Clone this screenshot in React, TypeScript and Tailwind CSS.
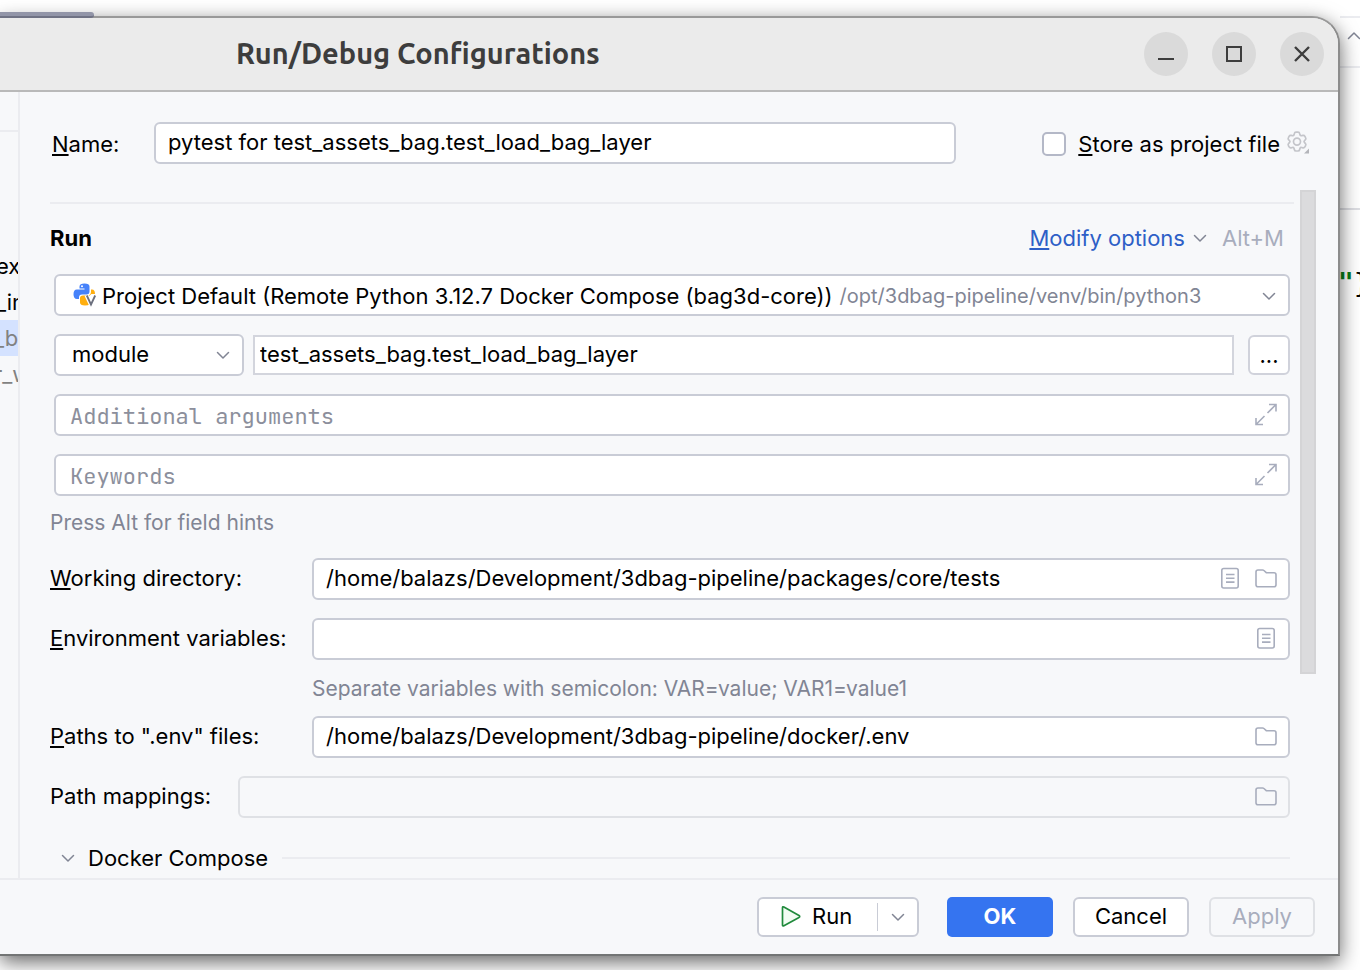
import React from "react";

const FIELD = "flex h-[42px] items-center rounded-md border-2 border-[#c9ccd6] bg-white";
const INPUT = "h-full min-w-0 flex-1 bg-transparent outline-none";
const MONO =
  "pt-0.5 font-['JetBrains_Mono','DejaVu_Sans_Mono',monospace] placeholder:text-[#8c8f9c]";

function Chevron({ className = "" }: { className?: string }) {
  return (
    <svg className={`shrink-0 ${className}`} width="14" height="10" viewBox="0 0 14 10" fill="none" stroke="#818594" strokeWidth="1.5" strokeLinecap="round" strokeLinejoin="round">
      <path d="M1.5 2.500 7 8 12.5 2.500" />
    </svg>
  );
}

function FolderIcon() {
  return (
    <svg width="24" height="24" viewBox="0 0 24 24" fill="none" stroke="#a8adbd" strokeWidth="1.6">
      <path d="M2 18.500V6a2 2 0 0 1 2-2h4.6a2 2 0 0 1 1.3.5L12.300 6.700H20a2 2 0 0 1 2 2V18.700a2 2 0 0 1-2 2H4a2 2 0 0 1-2-2Z" />
    </svg>
  );
}

function ListIcon() {
  return (
    <svg width="24" height="24" viewBox="0 0 24 24" fill="none" stroke="#a8adbd" strokeWidth="1.6">
      <rect x="3.800" y="2.500" width="16.400" height="19.500" rx="2" />
      <path d="M8 8.500h8.500M8 12.300h8.500M8 16.100h8.500" />
    </svg>
  );
}

function ExpandIcon() {
  return (
    <svg width="24" height="24" viewBox="0 0 24 24" fill="none" stroke="#a8adbd" strokeWidth="1.6">
      <path d="M15 1.500h7V8.500M22 1.500 13.500 10M2 15V21.500h7M2 21.500l8.500-8.500" />
    </svg>
  );
}

function PythonIcon() {
  return (
    <svg className="shrink-0" width="24" height="24" viewBox="0 0 24 24">
      <path fill="#4682fa" d="M6.500 3.500Q6.500.500 11.500.500t5 3V8.500q0 3-3 3H9q-3 0-3 3v1.500H4q-3.500 0-3.500-4.800T4 6.500h7.500V5.500h-5Z" />
      <circle cx="9" cy="3.200" r="1" fill="#fff" />
      <path fill="#ffaf0f" d="M18 6.500h1q3 0 3 4.500h-3.600l-2 1.800h-3.900l3.900 8.700q-1 1-4.400 1-5 0-5-3V15q0-2.500 3-2.500h4q4 0 4-4Z" />
      <path d="m13.500 12.500 4.500 9.500 4.500-9.500" fill="none" stroke="#fff" strokeWidth="4" />
      <path d="m13.800 12.500 4.200 9 4.200-9" fill="none" stroke="#6c707e" strokeWidth="1.800" />
    </svg>
  );
}

function GearIcon() {
  return (
    <svg width="24" height="24" viewBox="0 0 24 24" fill="none" stroke="#c4c5ca" strokeWidth="1.700" strokeLinejoin="round">
      <path d="M8.300 2.700Q8.600 1.200 10 1.200h2q1.400 0 1.700 1.500l.3 1.200q.4 1 1.600.8l1.400-.3q1.300-.2 1.900.9l.7 1.300q.7 1.200-.3 2.200l-.9 1q-.7.800 0 1.600l.9 1q1 1 .3 2.200l-.7 1.300q-.6 1.100-1.900.9l-1.400-.3q-1.200-.2-1.600.8l-.3 1.200Q13.400 20 12 20h-2q-1.400 0-1.700-1.500L8 17.300q-.4-1-1.600-.8l-1.400.3q-1.300.2-1.900-.9l-.7-1.300q-.7-1.200.3-2.200l.9-1q.7-.8 0-1.600l-.9-1q-1-1-.3-2.200l.7-1.300q.6-1.100 1.900-.9l1.400.3q1.200.2 1.600-.8Z" />
      <circle cx="11" cy="10.600" r="3.500" />
      <path d="M23 17.500v5h-5Z" fill="#b4b5ba" stroke="none" />
    </svg>
  );
}

function IconButton({ label, children }: { label: string; children: React.ReactNode }) {
  return (
    <button type="button" aria-label={label} className="size-6 shrink-0">
      {children}
    </button>
  );
}

function WindowButton({ label, d, width }: { label: string; d: string; width: number }) {
  return (
    <button type="button" aria-label={label} className="flex size-11 items-center justify-center rounded-full bg-[#dadada]">
      <svg width="20" height="20" viewBox="0 0 20 20" fill="none" stroke="#3d3d3d" strokeWidth={width}>
        <path d={d} />
      </svg>
    </button>
  );
}

function Mnemonic({ text }: { text: string }) {
  return (
    <>
      <span className="underline decoration-2 underline-offset-2 [text-decoration-skip-ink:none]">{text[0]}</span>
      {text.slice(1)}
    </>
  );
}

function Sidebar() {
  return (
    <aside className="flex w-5 shrink-0 flex-col overflow-hidden border-r-2 border-[#ebecf0] leading-9 whitespace-nowrap">
      <div className="h-[156px]">
        <div className="h-10 border-b-2 border-[#ebecf0]" />
      </div>
      <div className="h-9"><span className="-ml-1">ex</span></div>
      <div className="h-9"><span className="-ml-1">_in</span></div>
      <div className="h-9 bg-[#d4e2ff] text-[#818181]"><span className="-ml-1.5">_b</span></div>
      <div className="h-9 text-[#818181]"><span className="-ml-1.5">r_w</span></div>
    </aside>
  );
}

export default function App() {
  return (
    <div className="flex min-h-screen overflow-hidden bg-white font-['Inter',sans-serif] text-[22px] leading-7 text-black">
      <div className="relative flex min-w-0 flex-1 flex-col pt-4 pb-3.5">
        <div className="absolute top-3 left-0 z-20 h-1.5 w-[94px] rounded-r-sm border-b-2 border-[#6f7284] bg-[#9295a8]" />
        <main className="relative z-10 flex flex-1 flex-col overflow-hidden rounded-tr-[28px] border-t-2 border-r-2 border-b-2 border-t-[#999999] border-r-[#8c8c8c] border-b-[#737575] bg-[#f7f8fa] shadow-[0_6px_20px_rgba(0,0,0,0.6)]">
          <header className="flex h-[74px] shrink-0 items-center border-b-2 border-[#b9b9b9] bg-[#ebebeb] pr-3.5">
            <h1 className="flex-1 pb-0.5 pl-[236px] font-['Ubuntu','Noto_Sans',sans-serif] text-[29px] font-bold text-[#3d3d3d]">Run/Debug Configurations</h1>
            <div className="flex gap-6">
              <WindowButton label="Minimize" d="M2 15h16" width={2} />
              <WindowButton label="Maximize" d="M3 3h14v14H3Z" width={2} />
              <WindowButton label="Close" d="m3 3 14 14M17 3 3 17" width={2.4} />
            </div>
          </header>

          <div className="flex min-h-0 flex-1">
            <Sidebar />
            <section className="flex min-w-0 flex-1 flex-col pt-[30px] pr-[22px] pl-[30px]">
              <div className="flex h-[42px] items-center pr-1.5">
                <label htmlFor="name" className="w-[104px] pt-0.5 pl-0.5"><Mnemonic text="Name:" /></label>
                <div className={`${FIELD} flex-1 px-3 pb-0.5`}>
                  <input id="name" className={INPUT} defaultValue="pytest for test_assets_bag.test_load_bag_layer" />
                </div>
                <input id="store" type="checkbox" className="mt-0.5 ml-[86px] size-6 appearance-none rounded-[5px] border-2 border-[#b4b8c7] bg-white" />
                <label htmlFor="store" className="pt-0.5 pl-3"><Mnemonic text="Store as project file" /></label>
                <button type="button" aria-label="Storage settings" className="ml-1.5"><GearIcon /></button>
              </div>

              <div className="mt-[26px] flex gap-1.5">
                <div className="min-w-0 flex-1 pt-3">
                  <div className="flex h-[72px] items-center border-t-2 border-[#ebecf0] pr-2.5 pb-0.5">
                    <h2 className="flex-1 font-bold">Run</h2>
                    <a href="#options" className="text-[#2e5fc7]"><Mnemonic text="Modify options" /></a>
                    <Chevron className="ml-2" />
                    <span className="ml-[15px] text-[#a8adbd]">Alt+M</span>
                  </div>

                  <div className="flex flex-col gap-[18px] pr-1 pl-1">
                    <button type="button" className={`${FIELD} w-full pt-0.5 pr-3 pl-[17px] text-left whitespace-nowrap`}>
                      <span className="pb-0.5"><PythonIcon /></span>
                      <span className="ml-[5px]">Project Default (Remote Python 3.12.7 Docker Compose (bag3d-core))</span>
                      <span className="ml-[7px] flex-1 text-[20px] text-[#818594]">/opt/3dbag-pipeline/venv/bin/python3</span>
                      <Chevron />
                    </button>
                    <div className="flex items-center">
                      <div className={`${FIELD} relative w-[190px]`}>
                        <select aria-label="Target type" className="h-full w-full appearance-none bg-transparent pb-0.5 pl-4 outline-none">
                          <option>module</option>
                        </select>
                        <Chevron className="pointer-events-none absolute right-3" />
                      </div>
                      <input aria-label="Module" className="ml-[9px] h-10 min-w-0 flex-1 border-2 border-[#d3d5dd] bg-white px-[5px] pb-0.5 outline-none" defaultValue="test_assets_bag.test_load_bag_layer" />
                      <button type="button" aria-label="Browse modules" className="ml-3.5 h-10 w-[42px] rounded-md border-2 border-[#d0d2db] bg-white">...</button>
                    </div>
                    <div className={`${FIELD} pr-2.5 pl-3.5`}>
                      <input aria-label="Additional arguments" className={`${INPUT} ${MONO}`} placeholder="Additional arguments" />
                      <IconButton label="Expand"><ExpandIcon /></IconButton>
                    </div>
                    <div className={`${FIELD} pr-2.5 pl-3.5`}>
                      <input aria-label="Keywords" className={`${INPUT} ${MONO}`} placeholder="Keywords" />
                      <IconButton label="Expand"><ExpandIcon /></IconButton>
                    </div>
                  </div>

                  <p className="mt-[13px] text-[21px] text-[#818594]">Press Alt for field hints</p>

                  <div className="mt-[21px] flex flex-col gap-[18px] pr-1">
                    <div className="flex items-center">
                      <label htmlFor="cwd" className="w-[262px] pb-0.5"><Mnemonic text="Working directory:" /></label>
                      <div className={`${FIELD} flex-1 gap-3 pr-2.5 pb-0.5 pl-3`}>
                        <input id="cwd" className={INPUT} defaultValue="/home/balazs/Development/3dbag-pipeline/packages/core/tests" />
                        <IconButton label="Insert macros"><ListIcon /></IconButton>
                        <IconButton label="Browse"><FolderIcon /></IconButton>
                      </div>
                    </div>
                    <div className="flex items-center">
                      <label htmlFor="env" className="w-[262px] pb-0.5"><Mnemonic text="Environment variables:" /></label>
                      <div className={`${FIELD} flex-1 pr-2.5 pb-0.5 pl-3`}>
                        <input id="env" className={INPUT} />
                        <IconButton label="Edit variables"><ListIcon /></IconButton>
                      </div>
                    </div>
                  </div>
                  <p className="mt-[15px] pl-[262px] text-[21px] text-[#818594]">Separate variables with semicolon: VAR=value; VAR1=value1</p>
                  <div className="mt-[13px] flex flex-col gap-[18px] pr-1">
                    <div className="flex items-center">
                      <label htmlFor="paths" className="w-[262px] pb-0.5"><Mnemonic text={'Paths to ".env" files:'} /></label>
                      <div className={`${FIELD} flex-1 pr-2.5 pb-0.5 pl-3`}>
                        <input id="paths" className={INPUT} defaultValue="/home/balazs/Development/3dbag-pipeline/docker/.env" />
                        <IconButton label="Browse"><FolderIcon /></IconButton>
                      </div>
                    </div>
                    <div className="flex items-center">
                      <label htmlFor="mappings" className="w-[188px] pb-0.5">Path mappings:</label>
                      <div className="flex h-[42px] flex-1 items-center rounded-md border-2 border-[#dfe1e5] pr-2.5 pb-0.5 pl-3">
                        <input id="mappings" disabled className={INPUT} />
                        <IconButton label="Browse"><FolderIcon /></IconButton>
                      </div>
                    </div>
                  </div>
                  <div className="mt-[26px] flex items-center pr-1">
                    <button type="button" aria-expanded="true" className="flex items-center pl-[11px]">
                      <Chevron />
                      <span className="ml-[13px]">Docker Compose</span>
                    </button>
                    <div className="ml-3.5 h-0.5 flex-1 bg-[#ebecf0]" />
                  </div>
                </div>
                <div className="h-[484px] w-4 shrink-0 border-2 border-[#d4d4d6] bg-[#dbdbdd]" />
              </div>
            </section>
          </div>

          <footer className="flex h-[76px] shrink-0 items-center justify-end border-t-2 border-[#ebecf0] pr-[23px]">
            <div className="flex h-10 w-[162px] items-center rounded-md border-2 border-[#c9ccd6] bg-white">
              <button type="button" className="flex flex-1 items-center pb-0.5 pl-[22px]">
                <svg width="20" height="22" viewBox="0 0 20 22" fill="#f2fcf3" stroke="#208a3c" strokeWidth="1.700" strokeLinejoin="round">
                  <path d="M1.500 2.800q0-1.500 1.400-.8L18 10.400q1.400 1 0 2L2.900 20.700q-1.400.7-1.400-.8Z" />
                </svg>
                <span className="ml-[11px]">Run</span>
              </button>
              <button type="button" aria-label="More run options" className="flex h-7 w-10 items-center justify-center border-l border-[#c9ccd6]"><Chevron /></button>
            </div>
            <button type="button" className="ml-7 h-10 w-[106px] rounded-[5px] bg-[#3574f0] pb-0.5 font-bold text-white">OK</button>
            <button type="button" className="ml-5 h-10 w-[116px] rounded-md border-2 border-[#c9ccd6] bg-white pb-0.5">Cancel</button>
            <button type="button" disabled className="ml-5 h-10 w-[106px] rounded-md border-2 border-[#dfe1e5] pb-0.5 text-[#a8adbd]">Apply</button>
          </footer>
        </main>
      </div>

      <div className="flex w-5 shrink-0 flex-col overflow-hidden">
        <div className="h-[18px] border-b-2 border-[#ebecf0]" />
        <div className="flex h-[50px] items-center border-b-2 border-[#ebecf0] pb-3 pl-[7px]">
          <Chevron className="rotate-180" />
        </div>
        <div className="h-[142px] border-b-2 border-[#dddee3]" />
        <div className="mt-[58px] -ml-0.5 font-['DejaVu_Sans_Mono',monospace] text-[26px] leading-[30px] font-bold whitespace-nowrap">
          <span className="text-[#067d17]">"</span>
          <span className="font-normal">{"}"}</span>
        </div>
      </div>
    </div>
  );
}
